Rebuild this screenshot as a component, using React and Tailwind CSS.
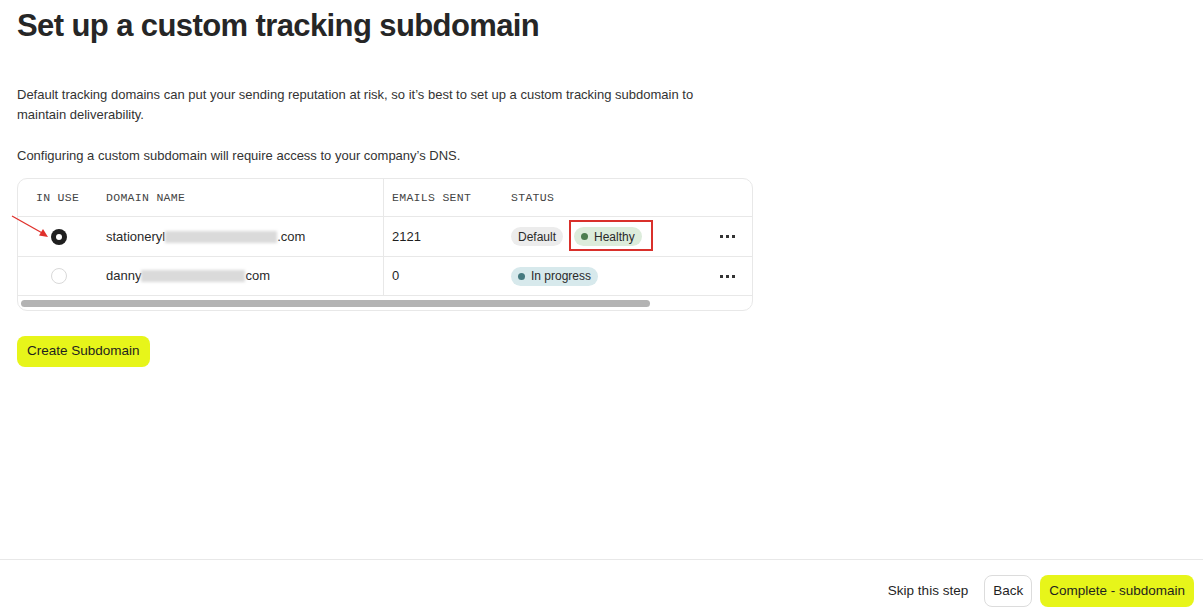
const sans = { fontFamily: '"Liberation Sans", Arial, sans-serif' };

function Pill({ children, dot, className }) {
  return (
    <span className={`inline-flex items-center gap-1.5 h-[19px] px-[7px] rounded-full text-[12px] text-[#2a2a2a] ${className}`}>
      {dot && <span className={`w-[7px] h-[7px] rounded-full ${dot}`} />}
      {children}
    </span>
  );
}

function Radio({ checked }) {
  if (checked) {
    return (
      <span className="w-[16px] h-[16px] rounded-full bg-[#1f1f1f] flex items-center justify-center">
        <span className="w-[6px] h-[6px] rounded-full bg-white" />
      </span>
    );
  }
  return <span className="w-[16px] h-[16px] rounded-full border border-[#d9d9d9] bg-white" />;
}

function Blur({ w }) {
  return (
    <span className="inline-flex h-[13px] items-center" style={{ width: w }}>
      <span className="block w-full h-[12px] bg-[#d6d6d6] blur-[1.5px] opacity-90" />
    </span>
  );
}

function Dots() {
  return (
    <div className="w-[48px] flex gap-[3px] pl-[16px]">
      <span className="w-[3px] h-[3px] bg-[#333]" />
      <span className="w-[3px] h-[3px] bg-[#333]" />
      <span className="w-[3px] h-[3px] bg-[#333]" />
    </div>
  );
}

export default function App() {
  return (
    <div className="h-screen flex flex-col bg-white text-[#1f1f1f] relative" style={sans}>
      <main className="flex-1 pl-[17px]">
        <h1 className="text-[31px] font-bold tracking-[-0.6px] leading-[36px] pt-[8px] text-[#262626]">
          Set up a custom tracking subdomain
        </h1>

        <div className="mt-[41px] text-[13px] leading-[20px] text-[#333] max-w-[700px]">
          <p>
            Default tracking domains can put your sending reputation at risk, so it’s best to set up a custom tracking subdomain to maintain deliverability.
          </p>
          <p className="mt-[21px]">Configuring a custom subdomain will require access to your company’s DNS.</p>
        </div>

        <div className="mt-[12px] w-[736px] h-[133px] border border-[#e8e8e8] rounded-[10px] overflow-hidden flex flex-col">
          <div className="flex h-[38px] items-center border-b border-[#e8e8e8] text-[11.5px] text-[#444] tracking-[0.3px]" style={{ fontFamily: '"Liberation Mono", monospace' }}>
            <div className="w-[88px] pl-[18px]">IN USE</div>
            <div className="w-[277px]">DOMAIN NAME</div>
            <div className="w-[128px] h-full flex items-center pl-[8px] border-l border-[#e8e8e8]">EMAILS SENT</div>
            <div className="flex-1">STATUS</div>
          </div>

          <div className="flex h-[40px] items-center border-b border-[#e8e8e8] text-[13px]">
            <div className="w-[88px] pl-[33px] flex"><Radio checked /></div>
            <div className="w-[277px] flex items-center text-[#2a2a2a]">
              stationeryl<Blur w={112} />.com
            </div>
            <div className="w-[128px] h-full flex items-center pl-[8px] border-l border-[#e8e8e8]">2121</div>
            <div className="flex-1 flex items-center gap-[11px]">
              <Pill className="bg-[#ececec]">Default</Pill>
              <Pill className="bg-[#dcecdb]" dot="bg-[#4c7d4f]">Healthy</Pill>
            </div>
            <Dots />
          </div>

          <div className="flex h-[39px] items-center border-b border-[#e8e8e8] text-[13px]">
            <div className="w-[88px] pl-[33px] flex"><Radio /></div>
            <div className="w-[277px] flex items-center text-[#2a2a2a]">
              danny<Blur w={104} />com
            </div>
            <div className="w-[128px] h-full flex items-center pl-[8px] border-l border-[#e8e8e8]">0</div>
            <div className="flex-1 flex items-center">
              <Pill className="bg-[#d7e9ec]" dot="bg-[#457a80]">In progress</Pill>
            </div>
            <Dots />
          </div>

          <div className="pl-[3px] pt-[4px]">
            <div className="w-[629px] h-[7px] rounded-full bg-[#b3b3b3]" />
          </div>
        </div>

        <button className="mt-[25px] h-[31px] px-[10px] rounded-[8px] bg-[#e7f51a] text-[13.5px] font-medium text-[#1f1f1f]">
          Create Subdomain
        </button>
      </main>

      <footer className="border-t border-[#e8e8e8] pt-[15px] pb-[8px] pr-[9px] flex items-center justify-end text-[13.5px]">
        <button className="h-[32px] text-[#1f1f1f] mr-[16px]">Skip this step</button>
        <button className="px-[8px] h-[32px] rounded-[8px] border border-[#dcdcdc] text-[#1f1f1f] mr-[8px]">Back</button>
        <button className="px-[9px] h-[32px] rounded-[8px] bg-[#e7f51a] text-[#1f1f1f]">Complete - subdomain</button>
      </footer>

      {/* annotations */}
      <div className="absolute left-[569px] top-[220px] w-[84px] h-[31px] border-2 border-[#d9302b]" />
      <svg className="absolute left-0 top-0 pointer-events-none" width="60" height="250">
        <line x1="12" y1="216" x2="44" y2="234" stroke="#e0302b" strokeWidth="1.3" />
        <polygon points="48,237 39,235.5 43,229" fill="#e0302b" />
      </svg>
    </div>
  );
}
